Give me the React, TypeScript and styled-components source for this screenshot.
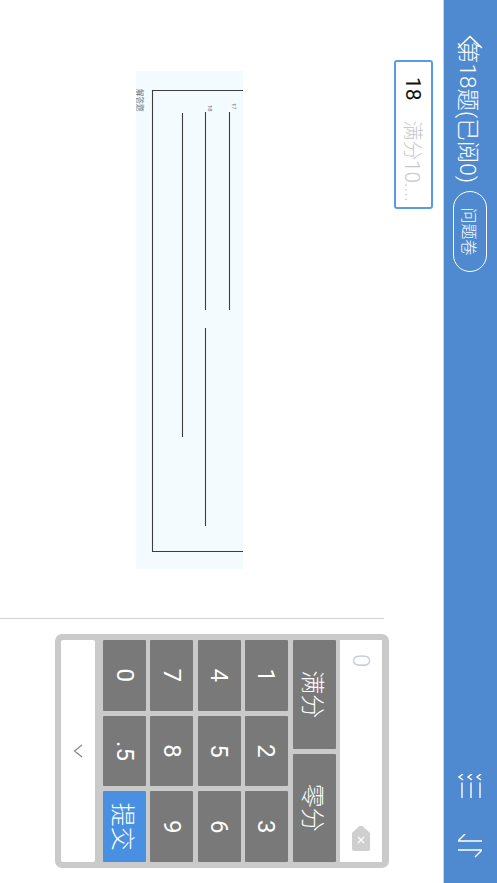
import React from 'react'
import styled, { createGlobalStyle } from 'styled-components'

const GlobalStyle = createGlobalStyle`
  html, body {
    margin: 0;
    width: 497px;
    height: 883px;
    overflow: hidden;
    background: #fff;
    font-family: Roboto, "Noto Sans CJK SC", sans-serif;
  }
`

const digits = ['1', '2', '3', '4', '5', '6', '7', '8', '9', '0', '.5']

const App = () => {
  return (
    <>
      <GlobalStyle />
      <Stage>
        <Header>
          <BackIcon viewBox="0 0 14 26">
            <path d="M13 1 L1.5 13 L13 25" />
          </BackIcon>
          <Title>第18题(已阅0)</Title>
          <PaperButton>问题卷</PaperButton>
          <Spacer />
          <ListIcon viewBox="0 0 24 25">
            <path d="M8.5 3 H24 M8.5 12 H24 M8.5 21 H24" />
            <path d="M0 2 L3 6 L6 2 M0 11 L3 15 L6 11 M0 20 L3 24 L6 20" />
          </ListIcon>
          <SwapIcon viewBox="0 0 24 24">
            <path d="M7 0 V24 L0 17 M16 24 V0 L23 7" />
          </SwapIcon>
        </Header>
        <Body>
          <PaperPane>
            <ScoreBox>
              <ScoreNumber>18</ScoreNumber>
              <ScoreHint>满分10....</ScoreHint>
            </ScoreBox>
            <AnswerSheet viewBox="0 0 498 107">
              <rect width="498" height="107" fill="#f3fbff" />
              <g stroke="#3d3d3d" strokeWidth="1.1" fill="none">
                <path d="M19.5 0 V90.5 H480.5 V0" />
                <path d="M41 13.5 H239" />
                <path d="M41 37.5 H239 M257 37.5 H455" />
                <path d="M42 60.5 H366" />
              </g>
              <g fill="#777" fontSize="6">
                <text x="32" y="11">17</text>
                <text x="34" y="35">18</text>
                <text x="18" y="106" fontSize="7.5">解答题</text>
              </g>
            </AnswerSheet>
          </PaperPane>
          <Divider />
          <Keypad>
            <Display>
              <DisplayValue>0</DisplayValue>
              <DeleteIcon viewBox="0 0 25 18">
                <path d="M7 0 H23 Q25 0 25 2 V16 Q25 18 23 18 H7 L0 10.5 V7.5 Z" fill="#cfcfcf" />
                <path d="M11 6 L17 12 M17 6 L11 12" stroke="#fff" strokeWidth="1.1" fill="none" />
              </DeleteIcon>
            </Display>
            <ScoreRow>
              <Key $word>满分</Key>
              <Key $word>零分</Key>
            </ScoreRow>
            <DigitGrid>
              {digits.map(d => (
                <Key key={d}>{d}</Key>
              ))}
              <Key $word $primary>提交</Key>
            </DigitGrid>
            <CollapseBar>
              <CollapseIcon viewBox="0 0 14 10">
                <path d="M1 1 L7 8.5 L13 1" />
              </CollapseIcon>
            </CollapseBar>
          </Keypad>
        </Body>
      </Stage>
    </>
  )
}

export default App

// the app was photographed in landscape, so the whole stage is turned a quarter
const Stage = styled.div`
  width: 883px;
  height: 497px;
  transform-origin: 0 0;
  transform: translateX(497px) rotate(90deg);
  display: flex;
  flex-direction: column;
  background: #fff;
`

const Header = styled.div`
  height: 54px;
  flex: none;
  box-sizing: border-box;
  display: flex;
  align-items: center;
  padding: 0 25px 0 35px;
  background: #4f8ad1;
  border-bottom: 1px solid #c9d3df;
  color: #fff;
`

const BackIcon = styled.svg`
  width: 14px;
  height: 26px;
  flex: none;
  margin-right: -8px;
  fill: none;
  stroke: #fff;
  stroke-width: 1.6;
`

const Title = styled.div`
  font-size: 22.5px;
  font-weight: 300;
  white-space: nowrap;
`

const PaperButton = styled.div`
  width: 81px;
  height: 34px;
  box-sizing: border-box;
  margin-left: 8px;
  border: 1.5px solid #fff;
  border-radius: 17px;
  display: flex;
  align-items: center;
  justify-content: center;
  font-size: 16px;
  font-weight: 300;
`

const Spacer = styled.div`
  flex: 1;
`

const ListIcon = styled.svg`
  width: 24px;
  height: 25px;
  flex: none;
  fill: none;
  stroke: #fff;
  stroke-width: 1.4;
`

const SwapIcon = styled.svg`
  width: 24px;
  height: 24px;
  flex: none;
  margin-left: 36px;
  fill: none;
  stroke: #fff;
  stroke-width: 1.4;
`

const Body = styled.div`
  flex: 1;
  display: flex;
`

const PaperPane = styled.div`
  width: 618px;
  flex: none;
  display: flex;
  flex-direction: column;
  align-items: flex-start;
  padding-top: 10px;
  box-sizing: border-box;
`

const ScoreBox = styled.div`
  width: 149px;
  height: 39px;
  margin-left: 60px;
  box-sizing: border-box;
  border: 2px solid #5a9be6;
  border-radius: 3px;
  display: flex;
  align-items: center;
  padding-left: 15px;
  font-size: 21px;
  white-space: nowrap;
  overflow: hidden;
`

const ScoreNumber = styled.span`
  color: #111;
`

const ScoreHint = styled.span`
  margin-left: 20px;
  color: #c7c7cd;
  font-size: 20px;
  font-weight: 300;
`

const AnswerSheet = styled.svg`
  width: 498px;
  height: 107px;
  margin: 151px 0 0 71px;
  display: block;
`

const Divider = styled.div`
  width: 1px;
  margin-top: 59px;
  background: #d2d2d2;
`

const Keypad = styled.div`
  width: 234px;
  height: 334px;
  margin: 54px 0 0 15px;
  box-sizing: border-box;
  padding: 7px 6px 6px;
  border-radius: 7px;
  background: #cacaca;
  display: flex;
  flex-direction: column;
`

const Display = styled.div`
  height: 42px;
  flex: none;
  margin-bottom: 4px;
  display: flex;
  align-items: center;
  justify-content: space-between;
  padding: 0 11px 0 14px;
  background: #fff;
`

const DisplayValue = styled.span`
  font-size: 24px;
  font-weight: 300;
  color: #c5cbd8;
`

const DeleteIcon = styled.svg`
  width: 25px;
  height: 18px;
`

const ScoreRow = styled.div`
  display: grid;
  grid-template-columns: 1fr 1fr;
  grid-auto-rows: 43px;
  column-gap: 5px;
  margin-bottom: 5px;
`

const DigitGrid = styled.div`
  display: grid;
  grid-template-columns: repeat(3, 1fr);
  grid-auto-rows: 43px;
  column-gap: 5px;
  row-gap: 4.33px;
`

const Key = styled.div<{ $primary?: boolean; $word?: boolean }>`
  display: flex;
  align-items: center;
  justify-content: center;
  font-size: 24px;
  font-weight: ${props => (props.$word ? 300 : 400)};
  color: #fff;
  background: ${props => (props.$primary ? '#4a90e2' : '#797979')};
  border-radius: 1px;
`

const CollapseBar = styled.div`
  height: 34px;
  flex: none;
  margin-top: 8px;
  display: flex;
  align-items: center;
  justify-content: center;
  background: #fff;
  border-radius: 2px;
`

const CollapseIcon = styled.svg`
  width: 14px;
  height: 10px;
  fill: none;
  stroke: #8a8a8a;
  stroke-width: 1.3;
`
